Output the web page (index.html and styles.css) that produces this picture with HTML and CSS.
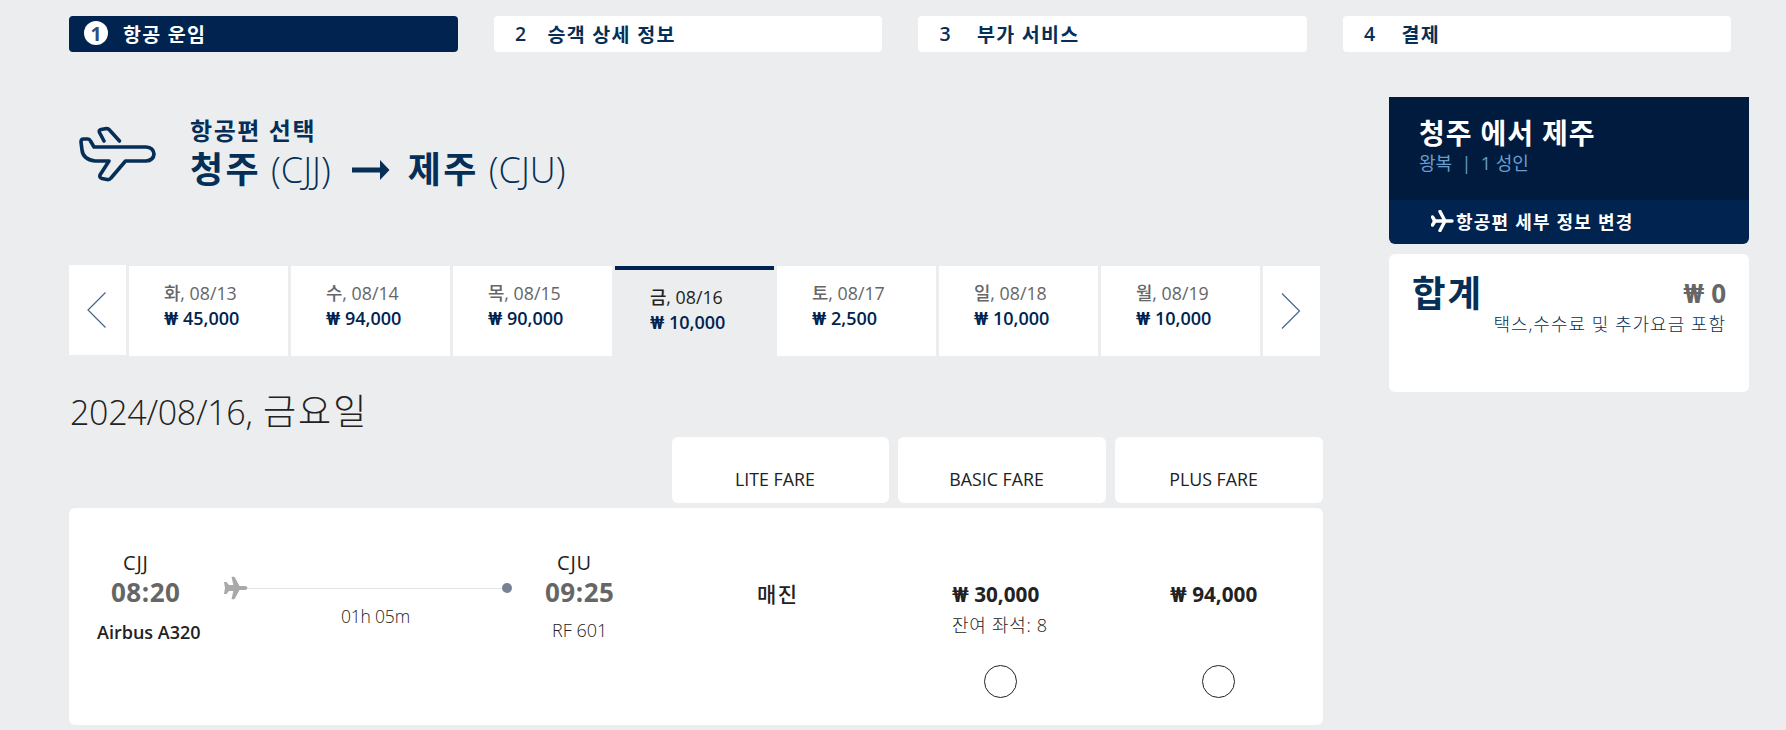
FILE: index.html
```html
<!DOCTYPE html>
<html lang="ko">
<head>
    <meta charset="UTF-8">
    <title>항공편 선택</title>
    <link rel="stylesheet" href="styles.css">
</head>
<body>

<svg class="defs" width="0" height="0">
    <symbol id="plane" viewBox="0 0 25 24">
        <path d="M24.5 12c0 1.400-1.600 2-3.300 2h-4.700l-4.400 8.300c-.4.700-.8 1-1.500 1H8.500l1.800-8.300H6l-2.500 3H1l1-6-1-6h2.500L6 9h4.300L8.500 .700h2.100c.7 0 1.100.3 1.500 1L16.500 10h4.700c1.700 0 3.300.6 3.300 2z"/>
    </symbol>
</svg>

<div class="steps">
    <div class="step active"><span class="num">1</span>항공 운임</div>
    <div class="step"><span class="num">2</span>승객 상세 정보</div>
    <div class="step wide"><span class="num">3</span>부가 서비스</div>
    <div class="step wide"><span class="num">4</span>결제</div>
</div>

<div class="main">
    <div class="flights">
        <div class="heading">
            <svg class="heading-icon" width="80" height="60" viewBox="0 0 80 60">
                <path d="M27 17L22.500 8.500Q21.500 6 24 5.500L29.500 4.500Q31.500 4.500 32.500 6L42.500 17"/>
                <path d="M17 23H69Q76.500 23.500 77 30Q76.500 36.500 69 37H48.500L34 54Q32.500 56 30 55.500L25 54.500Q22 53.500 23 51L32 37H18Q6 35.500 5 26L4 18Q4 15 6.500 15H11Q12.500 15 13.500 17Z"/>
            </svg>
            <div>
                <div class="heading-label">항공편 선택</div>
                <div class="route">
                    <strong>청주</strong>
                    <span class="code">(CJJ)</span>
                    <svg class="route-arrow" width="38" height="22" viewBox="0 0 38 22"><path d="M0 8.500h28V1l9.500 10L28 21v-7.500H0z"/></svg>
                    <strong>제주</strong>
                    <span class="code">(CJU)</span>
                </div>
            </div>
        </div>

        <div class="dates">
            <div class="nav prev"><svg width="20" height="38" viewBox="0 0 20 38"><path d="M18.500 1.500L1 19l17.500 17.500"/></svg></div>
            <div class="date"><div class="day">화, 08/13</div><div class="price"><span class="won">₩</span> 45,000</div></div>
            <div class="date"><div class="day">수, 08/14</div><div class="price"><span class="won">₩</span> 94,000</div></div>
            <div class="date"><div class="day">목, 08/15</div><div class="price"><span class="won">₩</span> 90,000</div></div>
            <div class="date selected"><div class="day">금, 08/16</div><div class="price"><span class="won">₩</span> 10,000</div></div>
            <div class="date"><div class="day">토, 08/17</div><div class="price"><span class="won">₩</span> 2,500</div></div>
            <div class="date"><div class="day">일, 08/18</div><div class="price"><span class="won">₩</span> 10,000</div></div>
            <div class="date"><div class="day">월, 08/19</div><div class="price"><span class="won">₩</span> 10,000</div></div>
            <div class="nav next"><svg width="20" height="38" viewBox="0 0 20 38"><path d="M1 1.500L18.500 19L1 36.500"/></svg></div>
        </div>

        <h2>2024/08/16, <span class="weekday">금요일</span></h2>

        <div class="fare-row fare-heads">
            <div class="fare-head">LITE FARE</div>
            <div class="fare-head">BASIC FARE</div>
            <div class="fare-head">PLUS FARE</div>
        </div>

        <div class="fare-row flight">
            <div class="info">
                <div class="stop depart">
                    <div class="airport">CJJ</div>
                    <div class="time">08:20</div>
                    <div class="aircraft">Airbus A320</div>
                </div>
                <div class="leg">
                    <div class="track">
                        <svg width="25" height="24"><use href="#plane"/></svg>
                        <span class="line"></span>
                        <span class="dot"></span>
                    </div>
                    <div class="duration">01h 05m</div>
                </div>
                <div class="stop arrive">
                    <div class="airport">CJU</div>
                    <div class="time">09:25</div>
                    <div class="number">RF 601</div>
                </div>
            </div>
            <div class="fare sold-out">매진</div>
            <div class="fare">
                <div class="fare-price"><span class="won">₩</span> 30,000</div>
                <div class="seats">잔여 좌석: 8</div>
                <span class="radio"></span>
            </div>
            <div class="fare">
                <div class="fare-price"><span class="won">₩</span> 94,000</div>
                <div class="seats"></div>
                <span class="radio"></span>
            </div>
        </div>
    </div>

    <div class="sidebar">
        <div class="trip">
            <div class="trip-title">청주 에서 제주</div>
            <div class="trip-sub">왕복 &nbsp;|&nbsp; 1 성인</div>
        </div>
        <div class="change">
            <svg width="23" height="22" viewBox="0 0 23 22"><path d="M1.500 7l2.500 4-2.500 4M3 11h18M9 1.500L14 11l-5 9.500"/></svg>
            <span>항공편 세부 정보 변경</span>
        </div>
        <div class="total">
            <div class="total-row">
                <span class="total-label">합계</span>
                <span class="total-price"><span class="won">₩</span> 0</span>
            </div>
            <div class="total-note">택스,수수료 및 추가요금 포함</div>
        </div>
    </div>
</div>

</body>
</html>
```

FILE: styles.css
```css
* { box-sizing: border-box; }
body {
  margin: 0;
  height: 730px;
  overflow: hidden;
  background: #ecedef;
  color: #222;
  font-family: "Open Sans", "Noto Sans CJK KR", sans-serif;
  font-size: 18px;
}
.defs { display: block; }
.won {
  font-family: Roboto, "Noto Sans CJK KR", sans-serif;
  line-height: 1;
}

/* steps */
.steps {
  display: grid;
  grid-template-columns: repeat(4, 1fr);
  gap: 36px;
  padding: 16px 55px 0 69px;
}
.step {
  display: flex;
  align-items: center;
  height: 36px;
  padding: 0 0 2px 15px;
  background: #fff;
  border-radius: 4px;
  color: #062f57;
  font-size: 19.5px;
  font-weight: 600;
  letter-spacing: 1.3px;
}
.num {
  width: 24px;
  height: 24px;
  margin-right: 15px;
  border-radius: 50%;
  letter-spacing: 0;
  line-height: 25px;
  text-align: center;
}
.wide .num { margin-right: 20px; }
.step.active {
  background: #002350;
  color: #fff;
}
.step.active .num {
  background: #fff;
  color: #2c5078;
  font-weight: 700;
}

.main {
  display: flex;
  align-items: flex-start;
  gap: 66px;
  padding-left: 69px;
}
.flights { width: 1254px; }

/* heading */
.heading {
  display: flex;
  height: 150px;
  margin-top: 64px;
  color: #062f57;
}
.heading-icon {
  margin: 8px 33px 0 8px;
  fill: none;
  stroke: #062f57;
  stroke-width: 3.6;
  stroke-linecap: round;
  stroke-linejoin: round;
}
.heading-label {
  font-size: 24px;
  font-weight: 600;
  line-height: 30px;
  letter-spacing: 1.6px;
}
.route {
  display: flex;
  align-items: center;
  font-size: 36px;
  line-height: 48px;
}
.route strong { letter-spacing: 2.4px; }
.code {
  margin-left: 10px;
  font-weight: 300;
}
.route-arrow {
  margin: 0 18px 0 21px;
  fill: #062f57;
}

/* date strip */
.dates {
  display: flex;
  gap: 3px;
}
.date, .nav {
  height: 90px;
  background: #fff;
}
.nav {
  width: 57px;
  display: flex;
  align-items: center;
  justify-content: center;
}
.nav svg {
  fill: none;
  stroke: #45658a;
  stroke-width: 1.2;
}
.prev { margin-top: -1px; }
.prev svg { margin-right: 1px; }
.next svg { margin-right: 1px; }
.date {
  width: 159px;
  padding: 15px 0 0 35px;
  line-height: 25px;
}
.day {
  color: #666;
  font-size: 17.8px;
  font-weight: 500;
}
.price {
  height: 25px;
  color: #002350;
  font-size: 18px;
  font-weight: 600;
}
.date.selected {
  background: none;
  border-top: 4px solid #002350;
}
.selected .day { color: #222; }

h2 {
  margin: 31px 0 0 1px;
  font-size: 34px;
  font-weight: 300;
  line-height: 50px;
  letter-spacing: -0.3px;
}
.weekday {
  margin-left: 2px;
  font-size: 36px;
  letter-spacing: 2px;
  line-height: 1;
}

/* fares */
.fare-row {
  display: grid;
  grid-template-columns: 594px 217px 208px 208px;
  column-gap: 9px;
}
.fare-head {
  height: 66px;
  padding: 30px 11px 0 0;
  background: #fff;
  border-radius: 6px;
  font-size: 17.8px;
  font-weight: 500;
  line-height: 24px;
  text-align: center;
}
.fare-head:first-child { grid-column: 2; }
.flight {
  height: 217px;
  margin-top: 5px;
  background: #fff;
  border-radius: 6px;
}
.info {
  display: flex;
  padding-top: 43px;
}
.depart { width: 154px; padding-left: 28px; }
.arrive { padding-left: 33px; }
.airport {
  padding-left: 26px;
  font-size: 20px;
  font-weight: 500;
  line-height: 24px;
  letter-spacing: 0.8px;
}
.arrive .airport { padding-left: 12px; }
.time {
  color: #666;
  font-size: 26px;
  font-weight: 700;
  line-height: 34px;
  letter-spacing: 0.5px;
}
.depart .time { padding-left: 14px; }
.aircraft {
  margin-top: 11px;
  font-weight: 600;
  line-height: 24px;
  white-space: nowrap;
}
.number {
  margin-top: 9px;
  padding-left: 7px;
  font-weight: 300;
  line-height: 24px;
}
.leg {
  width: 289px;
  padding-top: 25px;
}
.track {
  display: flex;
  align-items: center;
  height: 24px;
  fill: #a9a9a9;
}
.line {
  flex: 1;
  height: 1px;
  background: #e4e5e7;
}
.dot {
  width: 10px;
  height: 10px;
  border-radius: 50%;
  background: #788195;
}
.duration {
  margin-top: 3px;
  padding-left: 118px;
  font-size: 17.5px;
  font-weight: 300;
  letter-spacing: -0.2px;
  line-height: 26px;
}
.fare {
  padding: 73px 0 0 54px;
  line-height: 26px;
}
.fare:last-child { padding-left: 55px; }
.sold-out {
  padding-left: 85px;
  font-size: 21px;
  font-weight: 500;
  letter-spacing: 1.5px;
}
.fare-price {
  height: 26px;
  font-size: 20.7px;
  font-weight: 700;
}
.seats {
  height: 32px;
  line-height: 36px;
  font-weight: 300;
  letter-spacing: 0.7px;
}
.radio {
  display: block;
  width: 33px;
  height: 33px;
  margin: 26px 0 0 32px;
  border: 1px solid #222;
  border-radius: 50%;
}

/* sidebar */
.sidebar {
  width: 360px;
  margin-top: 45px;
}
.trip {
  height: 103px;
  padding: 18px 30px 0;
  background: #001b3d;
}
.trip-title {
  color: #fff;
  font-size: 28px;
  font-weight: 700;
  letter-spacing: 0.9px;
  line-height: 36px;
}
.trip-sub {
  color: #6b9ccb;
  line-height: 24px;
}
.change {
  display: flex;
  align-items: center;
  height: 44px;
  padding: 0 0 2px 42px;
  background: #002350;
  border-radius: 0 0 6px 6px;
  color: #fff;
  font-weight: 700;
  letter-spacing: 1.2px;
}
.change svg {
  margin-right: 2px;
  fill: none;
  stroke: #fff;
  stroke-width: 3.4;
  stroke-linecap: round;
  stroke-linejoin: round;
}
.total {
  height: 138px;
  margin-top: 10px;
  padding: 17px 23px 0;
  background: #fff;
  border-radius: 6px;
}
.total-row {
  display: flex;
  justify-content: space-between;
  height: 44px;
  line-height: 44px;
}
.total-label {
  color: #062f57;
  font-size: 36.5px;
  font-weight: 700;
  letter-spacing: 2px;
}
.total-price {
  color: #666;
  font-size: 26px;
  font-weight: 700;
}
.total-note {
  color: #062f57;
  font-weight: 300;
  letter-spacing: 1px;
  line-height: 18px;
  text-align: right;
}
```
